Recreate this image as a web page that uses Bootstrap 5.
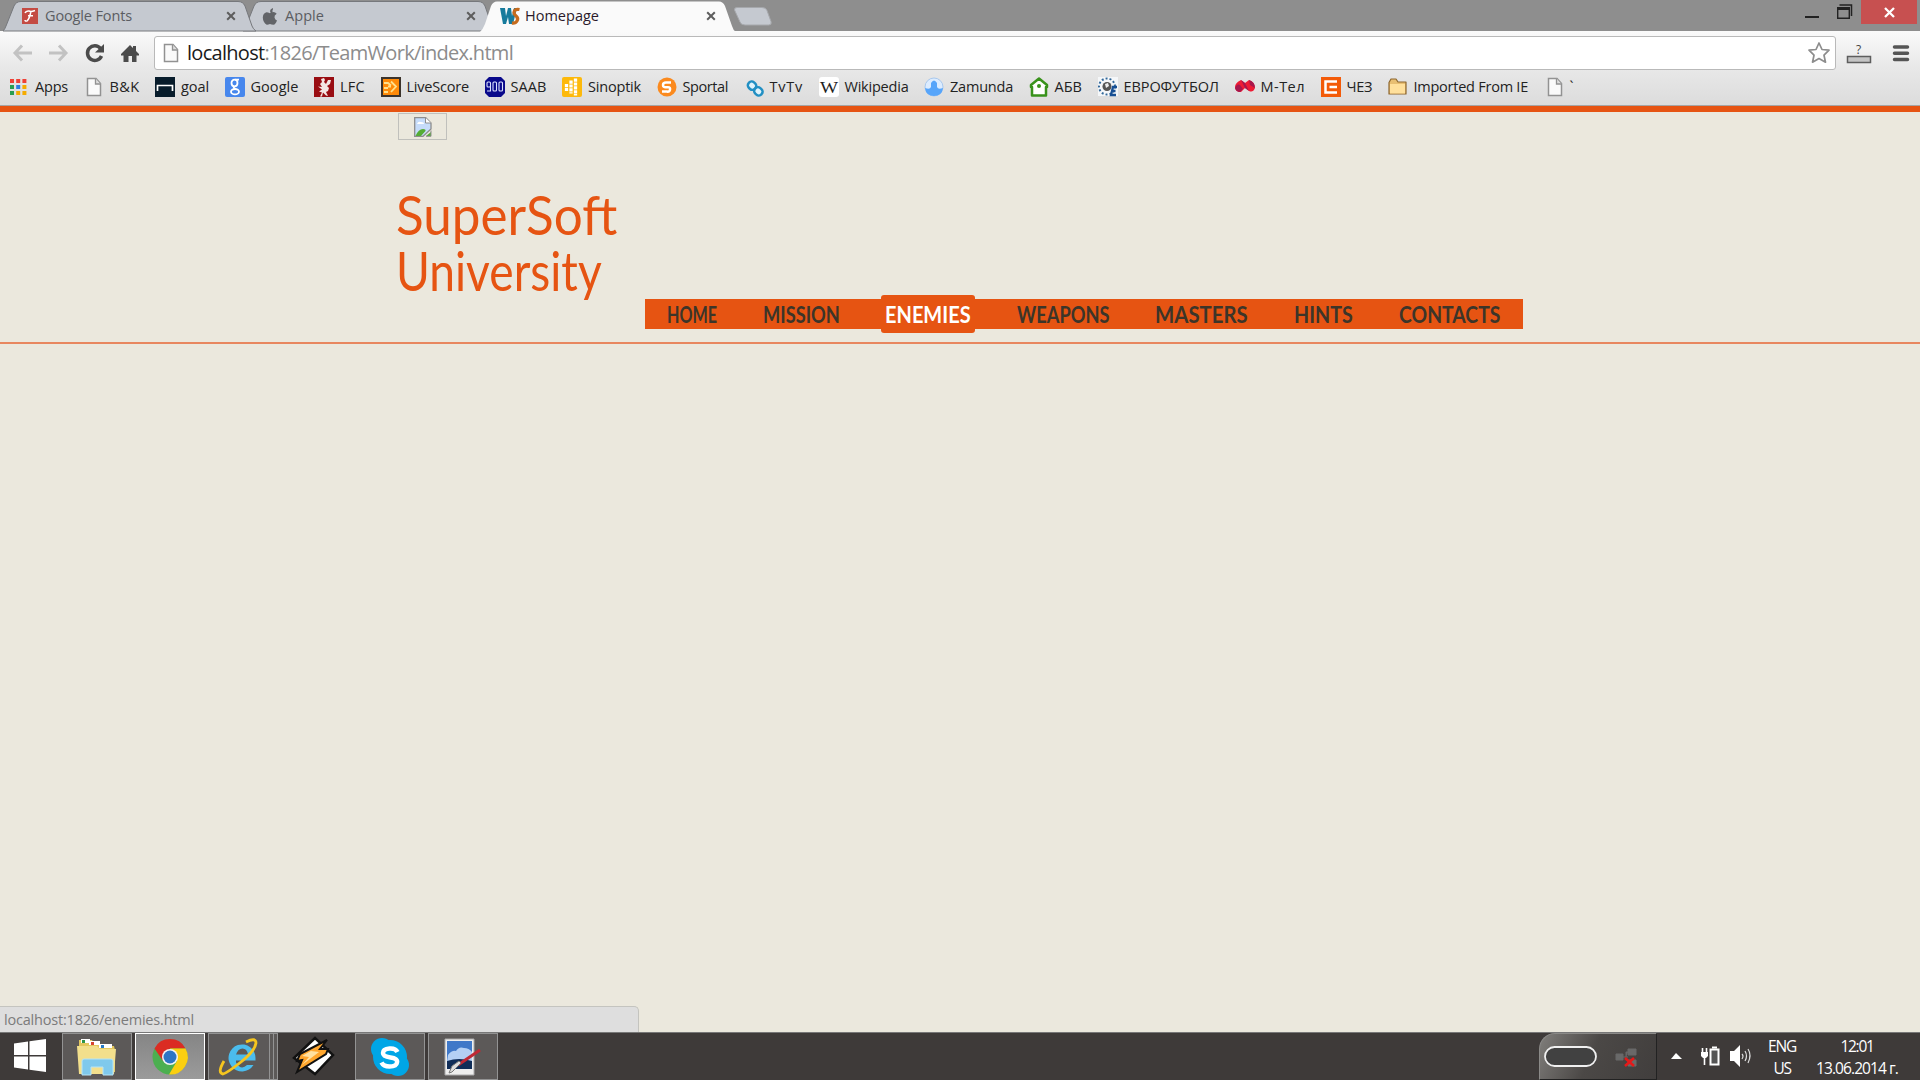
<!DOCTYPE html>
<html lang="en">
<head>
<meta charset="utf-8">
<title>Homepage</title>
<link href="https://cdn.jsdelivr.net/npm/bootstrap@5.3.0/dist/css/bootstrap.min.css" rel="stylesheet">
<style>
html,body{height:100%;overflow:hidden}
body{font-family:"Open Sans","Noto Sans",sans-serif;font-size:14.5px;line-height:20px;background:#ebe8dd;color:#222}
svg{display:block;flex:none;overflow:visible}
.fit{white-space:nowrap;display:block;flex:none}
.strip{height:31px;background:#8e8e8e}
.ctab{width:240px;height:31px;padding:4px 0 3px 22px;flex:none;color:#5b5d62;z-index:2}
.ctab.under{z-index:1}
.ctab.front{z-index:3;color:#2b1a2b;padding-left:20px}
.ctab>.shape{position:absolute;left:0;top:0;z-index:-1}
.ctab .ico{width:23px;flex:none}
.ctab.front .ico{width:25px}
.ctab .shut{position:absolute;left:226px;top:11px}
.newtab{margin-left:13px;margin-top:7px}
.winbtns{gap:18px}
.closebox{width:56px;height:24px;background:#c75050;margin-right:3px;margin-left:-9px}
.chrome-bars{height:75px;background:linear-gradient(#fafafa,#e8e8e8 50%,#dcdcdc);border-bottom:1px solid #a5a5a5}
.toolbar{height:39px;padding:5px 10px 0 12px}
.omni{height:34px;background:#fff;border:1px solid #b9b9b9;border-radius:3px;font-size:20px;line-height:30px;color:#8c8c8c;padding:0 5px 0 8px;margin-left:15px}
.omni b{font-weight:400;color:#1a1a1a}
.marks{gap:15.5px;padding-left:9px;height:35px;padding-bottom:1px}
.mark-item{gap:6px;flex:none}
.site-head{height:238px;border-top:6px solid #e65412;border-bottom:2px solid #e8875f}
.site-wrap{padding-left:398px}
.broken{width:49px;height:27px;border:1px solid #c0c0bc;margin-top:1px}
.brand{font-family:Lato,"Open Sans",sans-serif;color:#e65412;font-size:54px;line-height:56px;font-weight:400;margin-top:47px;margin-left:-2px;width:249px;flex:none}
.menu{background:#e65412;height:30px;width:878px;margin-top:187px;padding-left:22px;padding-bottom:1px;gap:45.6px;font-family:Lato,"Open Sans",sans-serif;font-weight:700;font-size:23px;line-height:26px;color:#3c3529;flex:none}
.menu a{color:inherit;text-decoration:none}
.menu .on{background:#e65412;color:#fff;padding:6px 4px;margin:0 -4px;border-radius:3px}
.squeeze span{display:inline-block;transform-origin:0 50%}
.status{height:26px;width:639px;background:#dedede;border:1px solid #c4c4bf;border-left:0;border-bottom:0;border-radius:0 5px 0 0;color:#7b7b7b;padding:1px 4px;line-height:23px}
.taskbar{height:48px;background:#3e3a39;border-top:1px solid #777;color:#fff}
.task{width:70px;height:47px;border:1px solid #939393;background:#5c5958;flex:none}
.task.live{background:linear-gradient(#858585,#9b9b9b);border:1px solid #fff}
.task-gap{margin-left:3px}
.ie-task{width:62px}
.stack{width:4px;border-left:0}
.amp{width:69px}
.tray-panel{width:118px;height:47px;border:1px solid #8b8a88;border-right-color:#222;border-bottom-color:#222;border-radius:16px 0 0 0;background:linear-gradient(115deg,#807e7b,#4b4846 45%,#413e3d);padding-left:4px}
.clock{font-size:15.5px;line-height:22px;padding-top:2px}
.lang-box{width:28px}
.time-box{width:82px;margin-left:20px;margin-right:22px}
</style>
<script src="https://cdn.jsdelivr.net/npm/bootstrap@5.3.0/dist/js/bootstrap.bundle.min.js"></script>
</head>
<body class="d-flex flex-column">
<svg width="0" height="0" class="position-absolute"><defs>
<symbol id="x" viewBox="0 0 10 10"><path d="M1.2 1.2 8.8 8.8M8.8 1.2 1.2 8.8" stroke="#5d5d5d" stroke-width="2"/></symbol>
<symbol id="page" viewBox="0 0 16 20"><path d="M1.5 1.5h8.5l4.500 5v12h-13z" fill="#fafafa" stroke="#929292" stroke-width="1.5"/><path d="M9.500 1.500v5.500h5" fill="#ddd" stroke="#929292" stroke-width="1.300"/></symbol>
</defs></svg>

<div class="strip d-flex flex-shrink-0 position-relative">
  <div class="ctab position-relative d-flex align-items-center">
    <svg class="shape" width="256" height="31"><path d="M3 31Q5 29 6 26L14 6Q16 1.500 21 1.500H238Q243 1.500 245 6L252 26Q253 29 256 31z" fill="#c5c9d0" stroke="#76787c"/></svg>
    <div class="ico"><svg width="16" height="16"><rect width="16" height="16" fill="#c44b43"/><path d="M3 5q1-2.500 4-2 2 1 6-.5M9 3q-1.500 8-4 10-2 .5-2-1M6 7.800h5" fill="none" stroke="#fff" stroke-width="1.500"/></svg></div>
    <span class="fit" data-w="87">Google Fonts</span><svg class="shut" width="10" height="10"><use href="#x"/></svg>
  </div>
  <div class="ctab under position-relative d-flex align-items-center">
    <svg class="shape" width="256" height="31"><path d="M3 31Q5 29 6 26L14 6Q16 1.500 21 1.500H238Q243 1.500 245 6L252 26Q253 29 256 31z" fill="#c5c9d0" stroke="#76787c"/></svg>
    <div class="ico"><svg width="16" height="17"><path d="M11 0q.3 3-3 4Q7.800 1 11 0M8 5.200Q11-.0 10.500 4.200 13 3.700 14.700 5.800 12 7.500 12.500 9.500 13 11.800 15 12.500 13.500 16.500 11.500 16.800 9.500 16.800 8 16 6 17 4.700 16.800 1 14.500.8 9.500 1 5 4.500 4.200 6 4.200 8 5.200" fill="#626468"/></svg></div>
    <span class="fit" data-w="39">Apple</span><svg class="shut" width="10" height="10"><use href="#x"/></svg>
  </div>
  <div class="ctab front position-relative d-flex align-items-center">
    <svg class="shape" width="256" height="32"><path d="M0 32Q3 29 5 24L11 6Q13 1.500 17 1.500H239Q243 1.500 245 6L252 26Q253 30 256 32z" fill="#fafafa"/></svg>
    <div class="ico"><svg width="20" height="18"><path d="M0 1h5l1 8 2-8h3l1 8 2-8h3l-4 16H9L8 10l-2 7H3z" fill="#177b9c"/><path d="M19.500 2.500q-5-1-5.500 3 0 2 2.500 4 2 2 .5 4.500-1.500 2.500-5 2" fill="none" stroke="#c66b1d" stroke-width="3.300"/></svg></div>
    <span class="fit" data-w="74">Homepage</span><svg class="shut" width="10" height="10"><use href="#x"/></svg>
  </div>
  <svg class="newtab" width="40" height="19"><path d="M4 .5H29q4 0 5 3l4 11q1 3.500-2 3.500H12q-4 0-5-3L1.500 3Q1 .5 4 .5z" fill="#c5c9d0" stroke="#a6a8ac"/></svg>
  <div class="winbtns ms-auto d-flex align-items-start">
    <svg width="14" height="20"><path d="M0 17h14" stroke="#222" stroke-width="2"/></svg>
    <svg width="15" height="20"><path d="M2.500 5h12v11" fill="none" stroke="#222" stroke-width="1.500"/><path d="M.7 8v10.300h11.600V8" fill="none" stroke="#222" stroke-width="1.400"/><path d="M0 8.500h13" stroke="#222" stroke-width="3"/></svg>
    <div class="closebox d-flex align-items-center justify-content-center"><svg width="11" height="9"><path d="M1 0 10 9M10 0 1 9" stroke="#fff" stroke-width="2.300"/></svg></div>
  </div>
</div>

<div class="chrome-bars flex-shrink-0">
  <div class="toolbar d-flex align-items-center">
    <svg width="21" height="18"><path d="M10 1.500 3 9l7 7.500M3 9h17" fill="none" stroke="#c2c2c2" stroke-width="3"/></svg>
    <svg width="20" height="18" class="ms-3"><path d="m10 1.500 7 7.500-7 7.500M17 9H0" fill="none" stroke="#c2c2c2" stroke-width="3"/></svg>
    <svg width="20" height="20" class="ms-3"><path d="M15.500 5.500A7.300 7.300 0 1 0 16.500 13" fill="none" stroke="#4b4b4b" stroke-width="3.500"/><path d="M19 1v8.500h-9z" fill="#4b4b4b"/></svg>
    <svg width="18" height="20" class="ms-3"><path d="M9 2 0 11v1.500h2.500V19h5v-6h3.500v6h4.500v-6.500H18V11l-3-3V3h-3v2z" fill="#4b4b4b"/></svg>
    <div class="omni flex-grow-1 d-flex align-items-center"><svg width="16" height="20"><use href="#page"/></svg><span class="fit ms-2" data-w="326"><b>localhost</b>:1826/TeamWork/index.html</span>
      <svg class="ms-auto" width="22" height="22"><path d="m11 1 3 6.500 7 .7-5 5 1.500 7L11 16.500 4.500 20.200 6 13.200 1 8.200l7-.7z" fill="#fff" stroke="#8d8d8d" stroke-width="1.700" stroke-linejoin="round"/></svg></div>
    <svg width="25" height="21" class="ms-2"><rect x="3.500" y="13.500" width="23" height="6" fill="#c4c4c4" stroke="#5d5d5d" stroke-width="1.500"/><text x="12" y="11" font-size="12" fill="#444">?</text></svg>
    <svg width="17" height="19" class="ms-4"><path d="M1.500 3h13M1.500 9.300h13M1.500 15.600h13" stroke="#555" stroke-width="3.500" stroke-linecap="round"/></svg>
  </div>
  <div class="marks d-flex align-items-center">
    <div class="mark-item d-flex align-items-center"><svg width="20" height="20"><g fill="#ef4136"><path d="M1 2h4v4H1zM7.200 2h4v4h-4zM13.400 2h4v4h-4z"/></g><path d="M1 8h4v4H1zM1 14h4v4H1z" fill="#2a9d50"/><path d="M7.200 8h4v4h-4z" fill="#2f7de1"/><path d="M13.400 8h4v4h-4zM7.200 14h4v4h-4zM13.400 14h4v4h-4z" fill="#f5ab00"/></svg><span class="fit" data-w="33">Apps</span></div>
    <div class="mark-item d-flex align-items-center"><svg width="20" height="20"><use href="#page" x="2" width="16" height="20"/></svg><span class="fit" data-w="30">B&amp;K</span></div>
    <div class="mark-item d-flex align-items-center"><svg width="20" height="20"><rect width="20" height="20" fill="#071c2b"/><path d="M2.500 14V8.500h15V14" fill="none" stroke="#fff" stroke-width="1.700"/></svg><span class="fit" data-w="28">goal</span></div>
    <div class="mark-item d-flex align-items-center"><svg width="20" height="20"><rect width="20" height="20" rx="2" fill="#4787ed"/><g fill="none" stroke="#fff" stroke-width="1.800"><ellipse cx="9.500" cy="6" rx="3" ry="3.300"/><ellipse cx="10" cy="14.700" rx="4" ry="2.700"/><path d="M10 2.700h4M9 9.500q-1 1.500 2 2.500"/></g></svg><span class="fit" data-w="48">Google</span></div>
    <div class="mark-item d-flex align-items-center"><svg width="20" height="20"><rect width="20" height="20" fill="#990d12"/><path d="m7 2 3-1 1 2-1 2 2 2 2-4 3 0-1 4-3 2 2 2-1 3-2 1 2 4-2-.5-3-3-1 4H6l2-4-3-1 3-2-4-3 4 .5-2-3 2-2z" fill="#f4e5e2"/></svg><span class="fit" data-w="25">LFC</span></div>
    <div class="mark-item d-flex align-items-center"><svg width="20" height="20"><rect x="1" y="1" width="18" height="18" fill="#ff8a08" stroke="#3b332b" stroke-width="2"/><path d="M3 6h4l3 2.500M3 11h4M3 15h4M10 4.500l5 5-5 5.500M10 9.500H7" fill="none" stroke="#ffe08c" stroke-width="1.800"/></svg><span class="fit" data-w="62.5">LiveScore</span></div>
    <div class="mark-item d-flex align-items-center"><svg width="20" height="20"><path d="M4 0h12l4 4v12l-4 4H4l-4-4V4z" fill="#09098b"/><g fill="none" stroke="#dce2ff" stroke-width="1.100"><rect x="2" y="5" width="3.500" height="5" rx="1"/><path d="M5.500 9v5H2"/><rect x="8" y="5" width="3.500" height="9" rx="1"/><rect x="14" y="5" width="3.500" height="9" rx="1"/></g></svg><span class="fit" data-w="36">SAAB</span></div>
    <div class="mark-item d-flex align-items-center"><svg width="20" height="20"><rect width="20" height="20" rx="2" fill="#fdb90b"/><path d="M13.500 1.500v17M9 3.500v13M4.500 7v7" stroke="#fff" stroke-width="3.300" stroke-dasharray="3.200 .7"/></svg><span class="fit" data-w="53">Sinoptik</span></div>
    <div class="mark-item d-flex align-items-center"><svg width="20" height="20"><circle cx="10" cy="10" r="9.500" fill="#fb8a1e"/><path d="M14 5.500H9Q6 5.500 6 8t3 2.200h2q2.500 0 2 2.500T10 14.500H5" fill="none" stroke="#fff" stroke-width="2.500"/></svg><span class="fit" data-w="45.5">Sportal</span></div>
    <div class="mark-item d-flex align-items-center"><svg width="20" height="20"><g transform="translate(1 1) rotate(42 10 10)" fill="#dff3fb" stroke="#218fc3" stroke-width="2.500"><rect x="2" y="6.500" width="8.500" height="7.500" rx="3.500"/><rect x="10.500" y="6.500" width="8.500" height="7.500" rx="3.500"/></g></svg><span class="fit" data-w="33.5">TvTv</span></div>
    <div class="mark-item d-flex align-items-center"><svg width="20" height="20"><rect width="20" height="20" rx="3" fill="#fff"/><text x="1" y="15.500" font-family="Liberation Serif" font-size="17" textLength="18" lengthAdjust="spacingAndGlyphs" fill="#222">W</text></svg><span class="fit" data-w="64">Wikipedia</span></div>
    <div class="mark-item d-flex align-items-center"><svg width="20" height="20"><circle cx="10" cy="10" r="9" fill="#dcecff" stroke="#a8c8ee"/><path d="M1 11q5 2 6-1V6q3-5 6 0v4q1 3 6 1-1 8-9 8t-9-8" fill="#57a5fa"/></svg><span class="fit" data-w="63">Zamunda</span></div>
    <div class="mark-item d-flex align-items-center"><svg width="20" height="20"><path d="M10 1.500 18 8v2h-1v8.500H3V10H2V8z" fill="#fff" stroke="#38921b" stroke-width="2.500" stroke-linejoin="round"/><circle cx="10" cy="9" r="2" fill="#38921b"/></svg><span class="fit" data-w="27.5">АБВ</span></div>
    <div class="mark-item d-flex align-items-center"><svg width="20" height="20"><rect width="20" height="19" fill="#f5f7f9"/><circle cx="9" cy="9.500" r="8" fill="none" stroke="#32689a" stroke-width="2" stroke-dasharray="2 2"/><circle cx="9" cy="9.500" r="4.500" fill="#555"/><path d="m7 7 3-1 1 3-3 2z" fill="#eee"/><path d="M19 10h-4l-2 8h5M13.500 14h4" fill="none" stroke="#174f94" stroke-width="2.300"/></svg><span class="fit" data-w="95.500">ЕВРОФУТБОЛ</span></div>
    <div class="mark-item d-flex align-items-center"><svg width="20" height="20"><path d="M10 6 14 3q6 2 6 8-2 5-6 3l-4-3-4 4Q0 15 0 10q0-4 6-7z" fill="#ee1b34"/><path d="m6 3 4 3 4 8-4-3zM0 11q2-5 5-3l3 4-3 3q-4 0-5-4m14-8q6 2 6 8l-5-3z" fill="#a7174c"/></svg><span class="fit" data-w="44.5">М-Тел</span></div>
    <div class="mark-item d-flex align-items-center"><svg width="20" height="20"><rect width="20" height="20" fill="#f35b09"/><path d="M16 4.500H4.500v11H16M16 10H8.500" fill="none" stroke="#fff" stroke-width="2.500"/></svg><span class="fit" data-w="25.5">ЧЕЗ</span></div>
    <div class="mark-item d-flex align-items-center"><svg width="20" height="20"><path d="M1 5.500 3 2h5l2 3h8v12H1z" fill="#e8bf73" stroke="#8d672f" stroke-width="1.200" stroke-linejoin="round"/><path d="M2 7h15v9.500H2z" fill="#ffe09c"/></svg><span class="fit" data-w="114.5">Imported From IE</span></div>
    <div class="mark-item d-flex align-items-center"><svg width="20" height="20"><use href="#page" x="3" width="16" height="20"/></svg><span>`</span></div>
  </div>
</div>

<header class="site-head flex-shrink-0">
  <div class="site-wrap d-flex">
    <div class="brand-col">
      <div class="broken d-flex align-items-center justify-content-center"><svg width="18" height="20"><path d="M.7.700h11L17 6v6L9 19.300H.7z" fill="#c6dcfa" stroke="#8d8d8d" stroke-width="1.300"/><path d="M11.500.700V6H17" fill="#fff" stroke="#8d8d8d"/><path d="M3 7q1-3 4-2 3 0 3 2z" fill="#fff"/><path d="M1.500 19q3-7 7.500-7 3 0 2.500 2L7 19zM12 19l5-4v4z" fill="#55ac35"/><path d="M17 13.500v5.800h-5" fill="none" stroke="#8d8d8d"/></svg></div>
      <div class="brand"><div class="fit squeeze" data-w="221"><span>SuperSoft</span></div><div class="fit squeeze" data-w="206"><span>University</span></div></div>
    </div>
    <nav class="menu d-flex align-items-center">
      <a class="fit squeeze" data-w="50" href="#"><span>HOME</span></a>
      <a class="fit squeeze" data-w="77" href="#"><span>MISSION</span></a>
      <div class="on"><a class="fit squeeze" data-w="86" href="#"><span>ENEMIES</span></a></div>
      <a class="fit squeeze" data-w="93" href="#"><span>WEAPONS</span></a>
      <a class="fit squeeze" data-w="93" href="#"><span>MASTERS</span></a>
      <a class="fit squeeze" data-w="59" href="#"><span>HINTS</span></a>
      <a class="fit squeeze" data-w="101" href="#"><span>CONTACTS</span></a>
    </nav>
  </div>
</header>

<main class="flex-grow-1 d-flex align-items-end"><div class="status"><span class="fit" data-w="190">localhost:1826/enemies.html</span></div></main>

<footer class="taskbar d-flex flex-shrink-0">
  <svg width="62" height="47"><path d="M14 10.500 28 8.500V22H14zM29.500 8.300 46 6v16H29.500zM14 23.500h14V36.500L14 34.500zM29.500 23.500H46v15.500L29.500 36.700z" fill="#fff"/></svg>
  <div class="task d-flex align-items-center justify-content-center"><svg width="40" height="40"><path d="M2 3h13l2 4h7l2 2h11l1 4v22H2z" fill="#e3c75f"/><path d="M4 2h9v4H4zM12 4h11v4H12zM22 7h13v4H22z" fill="#fff"/><path d="M5 3h3v3H5z" fill="#2d9547"/><path d="M14 5h3v3h-3z" fill="#d7432f"/><path d="M24 8h3v3h-3z" fill="#267ac7"/><path d="M0 9h20l3 3h16l-2 25H2z" fill="#f2df8c"/><path d="M5 24q0-2 2-2h27q2 0 2 2v14H26v-8H14v8H5z" fill="#7fc9ec" stroke="#b7e4f5"/></svg></div>
  <div class="task live task-gap d-flex align-items-center justify-content-center"><svg width="36" height="36" viewBox="-18 -18 36 36"><circle r="17.500" fill="#4caf50"/><path d="M-15.500-8.500A17.500 17.500 0 0 1 15.500-8.500H0L-7 4z" fill="#db2c23"/><path d="M15.500-8.500A17.500 17.500 0 0 1-1 17.500L7 4 0-8.500z" fill="#fbcf10"/><circle r="8" fill="#f4f4f4"/><circle r="6.500" fill="#2e75c4"/></svg></div>
  <div class="d-flex task-gap"><div class="task ie-task d-flex align-items-center justify-content-center"><svg width="40" height="38"><path d="M36.500 20.500A13.500 13.500 0 1 0 34.500 27H28q-6 6-11-2.500V22.500h19.500zM17 16.500q2-6 6.500-6t5.500 6z" fill="#4bbced" fill-rule="evenodd"/><path d="M27 4q10-5 10 1-1 8-15 19T4 36q-6-1 1-13" fill="none" stroke="#f5c51f" stroke-width="2.800"/></svg></div><div class="task stack"></div><div class="task stack"></div></div>
  <svg class="amp" height="47"><path d="m16 25 21-20 18 17-18 19z" fill="#fff" stroke="#111" stroke-width="2.500"/><path d="M49 7 22 21l-3 7 5-1-5 12 29-18 2-5h-8z" fill="#ffa62d" stroke="#111" stroke-width="2"/><path d="M45 11 24 23l7 1-7 8 17-13-8-1z" fill="#ffe1a1"/></svg>
  <div class="task ms-2 d-flex align-items-center justify-content-center"><svg width="38" height="38"><circle cx="11" cy="11" r="11" fill="#00a6e6"/><circle cx="27" cy="27" r="11" fill="#00a6e6"/><circle cx="19" cy="19" r="17" fill="#00a6e6"/><path d="M26.500 14q-2-4-8-3.500-6.500.5-6.500 4.500 0 3.500 7.500 4.500t6.500 5q-.5 4-7.500 4-6 0-8-4" fill="none" stroke="#fff" stroke-width="4.500"/></svg></div>
  <div class="task task-gap d-flex align-items-center justify-content-center"><svg width="38" height="38"><path d="M1 1h29v36H1z" fill="#eee" stroke="#aaa"/><path d="M3 3h25v23H3z" fill="#3f78c8"/><path d="M4 17q4-5 8-4 3-5 8-3 5 0 8 4v10H3z" fill="#b4d0f4"/><path d="M3 23q12-4 25 0v8H3z" fill="#102d58"/><path d="m14 27 22-15" stroke="#bf2935" stroke-width="3"/><path d="m17 25-9 9-3 1 3-7 7-5z" fill="#ddd" stroke="#777"/></svg></div>
  <div class="ms-auto d-flex">
    <div class="tray-panel d-flex align-items-center"><svg width="110" height="45"><rect x="1" y="13" width="51" height="19" rx="9.500" fill="#414141" stroke="#f0f0f0" stroke-width="1.800"/><path d="M72 20h7v6h-7zM84 15h8v6h-8zM84 26h8v6h-8zM79 23h5m-2 0v-5h2" fill="#696969" stroke="#696969"/><path d="m81 24 9 8m0-8-9 8" stroke="#e51919" stroke-width="2.600"/></svg></div>
    <svg width="111" height="47"><path d="m14 26 5-6 6 6z" fill="#fff"/><rect x="53.500" y="16.500" width="8" height="15" fill="#555" stroke="#fff" stroke-width="2"/><path d="M55 14.500h5" stroke="#fff" stroke-width="2"/><path d="M45.500 15v4m4-4v4M47.500 24v8" stroke="#fff" stroke-width="1.600"/><path d="M44 19h7v4l-2 2h-3l-2-2z" fill="#fff"/><path d="M73 18h4l6-6v22l-6-6h-4z" fill="#fff"/><path d="M85 21q2 2 0 5m3-8q3 5 0 10m3-12q4 6 0 14" fill="none" stroke="#ddd" stroke-width="1.200"/></svg>
    <div class="clock lang-box d-flex flex-column align-items-center"><span class="fit" data-w="28">ENG</span><span class="fit" data-w="17">US</span></div>
    <div class="clock time-box d-flex flex-column align-items-center"><span class="fit" data-w="33">12:01</span><span class="fit" data-w="82">13.06.2014 г.</span></div>
  </div>
</footer>
<script>
// Give every label its set width: headings are condensed, small labels are tracked.
document.querySelectorAll('.fit').forEach(function (el) {
  var want = parseFloat(el.dataset.w);
  if (el.classList.contains('squeeze')) {
    var s = el.firstElementChild;
    var k = want / s.offsetWidth;
    el.style.width = want + 'px';
    s.style.transform = 'scaleX(' + k + ')';
  } else {
    el.style.width = 'max-content';
    var d = (want - el.getBoundingClientRect().width) / el.textContent.length;
    el.style.letterSpacing = d + 'px';
    el.style.width = want + 'px';
  }
});
</script>
</body>
</html>
